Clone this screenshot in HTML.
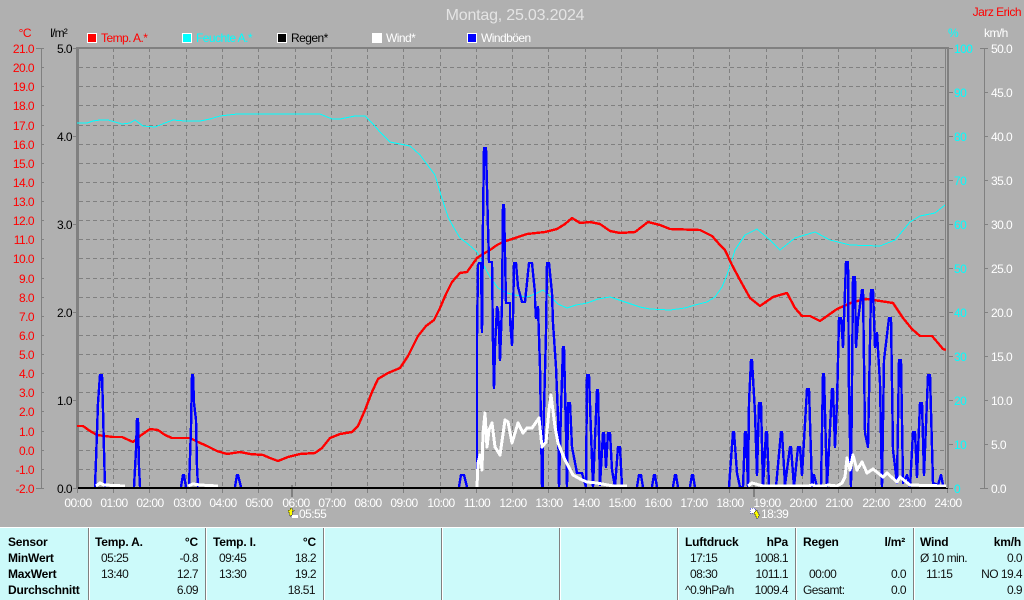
<!DOCTYPE html>
<html><head><meta charset="utf-8">
<style>
html,body{margin:0;padding:0;background:#b0b0b0;width:1024px;height:600px;overflow:hidden}
svg{position:absolute;left:0;top:0;display:block}
text{font-family:"Liberation Sans",sans-serif;font-size:12px;letter-spacing:-.55px}
.r{fill:#f00;text-anchor:end}
.k{fill:#000;text-anchor:end}
.c{fill:#0ff}
.w{fill:#fff}
.h{fill:#fff;text-anchor:middle}
.b{font-weight:bold;fill:#000;letter-spacing:-.2px}
.be{font-weight:bold;fill:#000;letter-spacing:-.2px;text-anchor:end}
.t{fill:#111}
.e{fill:#111;text-anchor:end}
</style></head><body>
<svg width="1024" height="600" viewBox="0 0 1024 600" xmlns="http://www.w3.org/2000/svg">
<rect width="1024" height="600" fill="#b0b0b0"/>
<text x="515" y="20" text-anchor="middle" fill="#e4e4e4" style="font-size:16px;letter-spacing:-.2px">Montag, 25.03.2024</text>
<text x="1021" y="16" class="r" style="letter-spacing:-.5px">Jarz Erich</text>

<g shape-rendering="crispEdges">
<path fill="none" stroke="#808080" stroke-dasharray="4 3" d="M113.5 48V488M149.5 48V488M186.5 48V488M222.5 48V488M258.5 48V488M295.5 48V488M331.5 48V488M367.5 48V488M403.5 48V488M440.5 48V488M476.5 48V488M512.5 48V488M548.5 48V488M585.5 48V488M621.5 48V488M657.5 48V488M693.5 48V488M729.5 48V488M766.5 48V488M802.5 48V488M838.5 48V488M875.5 48V488M911.5 48V488"/>
<path fill="none" stroke="#808080" stroke-dasharray="4 3" d="M79 67.5H945M79 86.5H945M79 105.5H945M79 125.5H945M79 144.5H945M79 163.5H945M79 182.5H945M79 201.5H945M79 220.5H945M79 239.5H945M79 258.5H945M79 278.5H945M79 297.5H945M79 316.5H945M79 335.5H945M79 354.5H945M79 373.5H945M79 392.5H945M79 411.5H945M79 431.5H945M79 450.5H945M79 469.5H945"/>
<path fill="none" stroke="#808080" d="M41.5 48V488M984.5 48V488M945.5 48V488"/>
<path fill="none" stroke="#808080" d="M36 48.5H44M41 67.5H44M41 86.5H44M41 105.5H44M41 125.5H44M41 144.5H44M41 163.5H44M41 182.5H44M41 201.5H44M41 220.5H44M41 239.5H44M41 258.5H44M41 278.5H44M41 297.5H44M41 316.5H44M41 335.5H44M41 354.5H44M41 373.5H44M41 392.5H44M41 411.5H44M41 431.5H44M41 450.5H44M41 469.5H44M36 488.5H44"/>
<path fill="none" stroke="#808080" d="M73 48.5H77M73 136.5H77M73 224.5H77M73 312.5H77M73 400.5H77M73 488.5H77"/>
<path fill="none" stroke="#808080" d="M948 48.5H953M948 92.5H953M948 136.5H953M948 180.5H953M948 224.5H953M948 268.5H953M948 312.5H953M948 356.5H953M948 400.5H953M948 444.5H953M948 488.5H953"/>
<path fill="none" stroke="#808080" d="M980 48.5H988M985 92.5H988M985 136.5H988M985 180.5H988M985 224.5H988M985 268.5H988M985 312.5H988M985 356.5H988M985 400.5H988M985 444.5H988M980 488.5H988"/>
<rect x="76" y="47" width="3" height="442" fill="#808080"/>
<rect x="947" y="47" width="2" height="442" fill="#808080"/>
<rect x="76" y="47" width="872" height="2" fill="#808080"/>
<path fill="none" stroke="#808080" d="M77.5 488V493M113.5 488V493M149.5 488V493M186.5 488V493M222.5 488V493M258.5 488V493M331.5 488V493M367.5 488V493M403.5 488V493M440.5 488V493M476.5 488V493M512.5 488V493M548.5 488V493M585.5 488V493M621.5 488V493M657.5 488V493M693.5 488V493M729.5 488V493M802.5 488V493M838.5 488V493M875.5 488V493M911.5 488V493M947.5 488V493"/>
<rect x="291" y="485" width="2" height="12" fill="#808080"/>
<rect x="753" y="485" width="2" height="12" fill="#808080"/>

<!-- legend -->
<rect x="87.5" y="33.5" width="9" height="9" fill="#f00" stroke="#fff"/>
<rect x="182.5" y="33.5" width="9" height="9" fill="#0ff" stroke="#fff"/>
<rect x="277.5" y="33.5" width="9" height="9" fill="#000" stroke="#fff"/>
<rect x="372" y="33" width="10" height="10" fill="#fff"/>
<rect x="467.5" y="33.5" width="9" height="9" fill="#00f" stroke="#fff"/>
</g>
<text x="101" y="42" fill="#f00">Temp. A.*</text>
<text x="196" y="42" fill="#0ff">Feuchte A.*</text>
<text x="291" y="42" fill="#000">Regen*</text>
<text x="386" y="42" fill="#fff">Wind*</text>
<text x="481" y="42" fill="#fff">Windböen</text>
<text x="31" y="37" class="r">°C</text>
<text x="67" y="37" class="k" style="letter-spacing:-.8px">l/m²</text>
<text x="948" y="37" class="c">%</text>
<text x="984" y="37" class="w">km/h</text>

<!-- data -->
<g fill="none" shape-rendering="crispEdges" stroke-linejoin="round">
<polyline stroke="#00ffff" stroke-width="1" points="77,123 87,123 93,121 100,120 108,120 115,122 122,124 130,123 135,120 143,126 155,127 165,123 173,120 185,121 200,121 210,119 220,116 237,114 320,114 332,119 340,119 355,116 365,116 373,124 380,132 390,142 410,146 420,155 435,175 440,192 448,217 454,228 460,238 468,244 477,252 483,264 490,277 498,288 507,293 515,295 527,297 535,294 543,290 550,296 558,304 567,308 576,305 587,303 598,299 610,297 625,302 640,307 650,309 670,310 685,308 695,305 707,302 715,297 722,287 727,275 735,250 745,235 757,229 770,240 780,250 795,238 815,232 830,240 850,245 880,246 895,240 910,222 920,216 935,213 945,205"/>
<polyline stroke="#ff0000" stroke-width="2.4" points="77,426 83,426 90,431 97,435 113,437 122,437 133,442 140,436 150,429 158,430 165,435 172,438 190,438 198,442 207,446 217,451 227,454 240,452 250,454 263,455 270,458 278,461 288,457 300,454 315,453 322,448 330,438 340,434 352,432 358,426 365,410 372,392 378,379 388,373 400,368 408,356 418,336 426,326 434,320 440,308 446,294 452,282 460,273 467,272 472,265 477,258 483,254 490,250 497,245 503,242 515,238 527,234 545,232 557,229 565,224 572,218 580,223 590,222 600,224 610,231 620,233 635,232 648,222 660,225 670,229 700,230 712,236 720,245 725,250 732,265 740,280 750,298 760,306 773,297 787,293 795,308 802,316 810,316 820,321 837,309 853,302 867,299 880,301 893,303 903,318 912,329 920,336 932,336 938,343 943,349 946,350"/>
<g stroke="#0000ff" stroke-width="2.4">
<polyline points="95,487 96,460 98,403 100,375 102,375 103,410 104,450 105,487"/>
<polyline points="134,487 136,450 137,419 138,419 139,467 140,487"/>
<polyline points="181,487 183,475 184,475 186,487"/>
<polyline points="189,487 191,427 192,375 193,375 194,403 196,420 197,467 198,487"/>
<polyline points="235,487 237,475 238,475 241,487"/>
<polyline points="459,487 461,475 464,475 467,487"/>
<polyline points="477,487 477,338 478,265 479,263 481,263 482,332 483,220 484,148 486,148 487,187 488,227 489,262 492,262 493,345 494,388 495,347 497,307 498,310 499,330 500,360 502,305 503,205 504,205 506,303 510,303 510,320 512,345 513,317 514,263 516,263 518,287 522,302 525,302 529,263 532,263 535,293 535,300 536,318 538,307 540,367 542,487 543,487 543,447 546,333 547,263 549,263 552,293 553,323 556,367 558,417 559,487 561,410 563,347 564,347 566,433 567,487 568,403 570,403 572,447 577,473 582,473 586,487 587,375 589,375 591,433 593,487 597,390 598,390 600,485 603,433 604,433 606,467 608,433 610,433 612,470 615,487 618,447 620,447 622,487"/>
<polyline points="637,487 639,475 641,475 643,487"/>
<polyline points="652,487 654,475 655,475 657,487"/>
<polyline points="673,487 675,475 676,475 678,487"/>
<polyline points="690,487 692,475 693,475 695,487"/>
<polyline points="729,487 733,432 734,432 737,473 740,487 743,487 745,432 746,432 748,487 749,403 751,360 752,360 755,413 757,475 759,403 761,403 763,487 766,432 767,432 769,487"/>
<polyline points="776,487 781,432 782,432 785,485 790,447 791,447 794,487 798,447 800,447 802,475 807,389 809,389 812,487 814,475 817,487 821,487 823,374 824,374 827,487 832,389 833,389 835,447 837,403 839,318 841,318 843,347 846,262 848,262 849,393 851,487 853,277 855,277 856,347 858,320 862,290 863,290 865,433 868,447 871,290 873,290 875,347 877,333 880,383 882,487 884,360 889,318 891,318 893,450 897,483 899,360 901,360 903,483 907,475 910,487 913,432 915,432 917,477 920,403 922,403 924,475 928,375 930,375 933,483 938,485 941,475 943,485"/>
</g>
<g stroke="#ffffff" stroke-width="3">
<polyline points="96,486 100,483 104,485 125,486"/>
<polyline points="188,486 193,484 200,485 218,486"/>
<polyline points="477,487 478,463 480,455 482,470 483,433 485,413 487,447 489,430 492,423 495,447 500,455 505,420 508,422 512,443 518,423 523,433 527,428 532,428 539,418 542,447 546,442 549,410 551,395 555,427 558,443 565,460 573,475 580,479 587,482 597,483 613,486 627,486"/>
<polyline points="748,486 752,483 763,486 808,486 812,485 816,486 824,486 828,485 837,486 842,483 845,477 847,458 850,470 853,455 857,470 862,462 867,473 873,469 883,477 887,473 897,482 900,477 910,485 946,486"/>
</g>
<rect x="78" y="487" width="868" height="1" fill="#000" stroke="none"/>
<rect x="78" y="488" width="870" height="1" fill="#000" stroke="none"/>
</g>

<!-- left temp -->
<text x="34" y="53" class="r">21.0</text><text x="34" y="72" class="r">20.0</text><text x="34" y="91" class="r">19.0</text><text x="34" y="110" class="r">18.0</text><text x="34" y="130" class="r">17.0</text><text x="34" y="149" class="r">16.0</text><text x="34" y="168" class="r">15.0</text><text x="34" y="187" class="r">14.0</text><text x="34" y="206" class="r">13.0</text><text x="34" y="225" class="r">12.0</text><text x="34" y="244" class="r">11.0</text><text x="34" y="263" class="r">10.0</text><text x="34" y="283" class="r">9.0</text><text x="34" y="302" class="r">8.0</text><text x="34" y="321" class="r">7.0</text><text x="34" y="340" class="r">6.0</text><text x="34" y="359" class="r">5.0</text><text x="34" y="378" class="r">4.0</text><text x="34" y="397" class="r">3.0</text><text x="34" y="416" class="r">2.0</text><text x="34" y="436" class="r">1.0</text><text x="34" y="455" class="r">0.0</text><text x="34" y="474" class="r">-1.0</text><text x="34" y="493" class="r">-2.0</text>
<text x="72" y="53" class="k">5.0</text><text x="72" y="141" class="k">4.0</text><text x="72" y="229" class="k">3.0</text><text x="72" y="317" class="k">2.0</text><text x="72" y="405" class="k">1.0</text><text x="72" y="493" class="k">0.0</text>
<!-- right % -->
<text x="954" y="53" class="c">100</text><text x="954" y="97" class="c">90</text><text x="954" y="141" class="c">80</text><text x="954" y="185" class="c">70</text><text x="954" y="229" class="c">60</text><text x="954" y="273" class="c">50</text><text x="954" y="317" class="c">40</text><text x="954" y="361" class="c">30</text><text x="954" y="405" class="c">20</text><text x="954" y="449" class="c">10</text><text x="954" y="493" class="c">0</text>
<!-- right km/h -->
<text x="991" y="53" class="w">50.0</text><text x="991" y="97" class="w">45.0</text><text x="991" y="141" class="w">40.0</text><text x="991" y="185" class="w">35.0</text><text x="991" y="229" class="w">30.0</text><text x="991" y="273" class="w">25.0</text><text x="991" y="317" class="w">20.0</text><text x="991" y="361" class="w">15.0</text><text x="991" y="405" class="w">10.0</text><text x="991" y="449" class="w">5.0</text><text x="991" y="493" class="w">0.0</text>
<!-- hours -->
<text x="78" y="507" class="h">00:00</text><text x="114" y="507" class="h">01:00</text><text x="150" y="507" class="h">02:00</text><text x="187" y="507" class="h">03:00</text><text x="223" y="507" class="h">04:00</text><text x="259" y="507" class="h">05:00</text><text x="296" y="507" class="h">06:00</text><text x="332" y="507" class="h">07:00</text><text x="368" y="507" class="h">08:00</text><text x="404" y="507" class="h">09:00</text><text x="441" y="507" class="h">10:00</text><text x="477" y="507" class="h">11:00</text><text x="513" y="507" class="h">12:00</text><text x="549" y="507" class="h">13:00</text><text x="586" y="507" class="h">14:00</text><text x="622" y="507" class="h">15:00</text><text x="658" y="507" class="h">16:00</text><text x="694" y="507" class="h">17:00</text><text x="730" y="507" class="h">18:00</text><text x="767" y="507" class="h">19:00</text><text x="803" y="507" class="h">20:00</text><text x="839" y="507" class="h">21:00</text><text x="876" y="507" class="h">22:00</text><text x="912" y="507" class="h">23:00</text><text x="948" y="507" class="h">24:00</text>
<text x="299" y="518" class="w">05:55</text>
<text x="761" y="518" class="w">18:39</text>
<g shape-rendering="crispEdges">
<path d="M288 510h2v-2h2v2h2v1h-2v4h-1v1h-1v-1h-1v-3h-1z" fill="#ffff00" stroke="#222" stroke-width=".4"/>
<rect x="292" y="515" width="6" height="3" fill="#fff"/>
<rect x="750" y="508" width="5" height="5" fill="#fff" stroke="#00c" stroke-width=".5" stroke-dasharray="1 1"/>
<path d="M756 510h1v2h1v2h1v2h-1v2h-2v-2h-1v-2h-1v-2h1v-1h1z" fill="#ffff00" stroke="#222" stroke-width=".4"/>
</g>

<!-- bottom panel -->
<rect x="0" y="527" width="1024" height="73" fill="#ccfafa"/>
<g shape-rendering="crispEdges">
<rect x="0" y="527" width="1024" height="1" fill="#ffffff"/>
<path fill="none" stroke="#808080" d="M88.5 528V600M205.5 528V600M323.5 528V600M441.5 528V600M559.5 528V600M677.5 528V600M795.5 528V600M913.5 528V600"/>
<path fill="none" stroke="#fff" d="M89.5 528V600M206.5 528V600M324.5 528V600M442.5 528V600M560.5 528V600M678.5 528V600M796.5 528V600M914.5 528V600"/>
</g>
<text x="8" y="546" class="b">Sensor</text><text x="8" y="562" class="b">MinWert</text><text x="8" y="578" class="b">MaxWert</text><text x="8" y="594" class="b">Durchschnitt</text>
<text x="95" y="546" class="b">Temp. A.</text><text x="198" y="546" class="be">°C</text>
<text x="101" y="562" class="t">05:25</text><text x="198" y="562" class="e">-0.8</text>
<text x="101" y="578" class="t">13:40</text><text x="198" y="578" class="e">12.7</text>
<text x="198" y="594" class="e">6.09</text>
<text x="213" y="546" class="b">Temp. I.</text><text x="316" y="546" class="be">°C</text>
<text x="219" y="562" class="t">09:45</text><text x="316" y="562" class="e">18.2</text>
<text x="219" y="578" class="t">13:30</text><text x="316" y="578" class="e">19.2</text>
<text x="315" y="594" class="e">18.51</text>
<text x="685" y="546" class="b">Luftdruck</text><text x="788" y="546" class="be">hPa</text>
<text x="690" y="562" class="t">17:15</text><text x="788" y="562" class="e">1008.1</text>
<text x="690" y="578" class="t">08:30</text><text x="788" y="578" class="e">1011.1</text>
<text x="685" y="594" class="t">^0.9hPa/h</text><text x="788" y="594" class="e">1009.4</text>
<text x="803" y="546" class="b">Regen</text><text x="905" y="546" class="be">l/m²</text>
<text x="809" y="578" class="t">00:00</text><text x="906" y="578" class="e">0.0</text>
<text x="803" y="594" class="t">Gesamt:</text><text x="906" y="594" class="e">0.0</text>
<text x="920" y="546" class="b">Wind</text><text x="1021" y="546" class="be">km/h</text>
<text x="920" y="562" class="t">Ø 10 min.</text><text x="1022" y="562" class="e">0.0</text>
<text x="926" y="578" class="t">11:15</text><text x="1022" y="578" class="e">NO 19.4</text>
<text x="1022" y="594" class="e">0.9</text>
</svg>
</body></html>
